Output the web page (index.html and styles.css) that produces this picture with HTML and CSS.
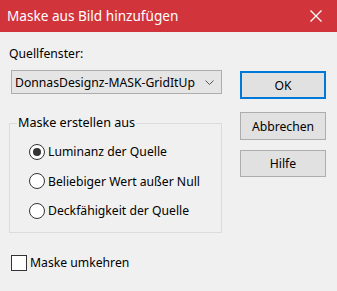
FILE: index.html
```html
<!DOCTYPE html>
<html lang="de">
<head>
  <meta charset="UTF-8">
  <title>Maske aus Bild hinzufügen</title>
  <link rel="stylesheet" href="styles.css">
</head>
<body>
  <div class="window">
    <div class="titlebar">
      <span class="title">Maske aus Bild hinzufügen</span>
      <svg class="close" width="12" height="12" viewBox="0 0 12 12">
        <path d="M0.5 0.5 L11.5 11.5 M11.5 0.5 L0.5 11.5" stroke="#fff" stroke-width="1.3" fill="none"/>
      </svg>
    </div>

    <div class="content">
      <div class="left">
        <div class="field-label">Quellfenster:</div>
        <div class="combo">
          <span>DonnasDesignz-MASK-GridItUp</span>
          <svg class="chevron" width="9" height="5" viewBox="0 0 9 5">
            <path d="M0.5 0.5 L4.5 4.5 L8.5 0.5" stroke="#555" stroke-width="1" fill="none"/>
          </svg>
        </div>

        <div class="group">
          <span class="group-title">Maske erstellen aus</span>
          <label class="option"><input type="radio" name="src" checked> Luminanz der Quelle</label>
          <label class="option"><input type="radio" name="src"> Beliebiger Wert außer Null</label>
          <label class="option"><input type="radio" name="src"> Deckfähigkeit der Quelle</label>
        </div>

        <label class="check"><input type="checkbox"> Maske umkehren</label>
      </div>

      <div class="right">
        <button class="btn default">OK</button>
        <button class="btn">Abbrechen</button>
        <button class="btn help">Hilfe</button>
      </div>
    </div>
  </div>
</body>
</html>
```

FILE: styles.css
```css
body {
  margin: 0;
  font-family: 'Noto Sans', 'DejaVu Sans', sans-serif;
  font-size: 12.2px;
  color: #000;
  background: #f0f0f0;
}

.window {
  width: 337px;
  height: 291px;
  background: #f0f0f0;
}

.titlebar {
  height: 32px;
  background: #d1343a;
  display: flex;
  align-items: center;
  justify-content: space-between;
  padding: 0 15px 0 7px;
}

.title {
  color: #fff;
  font-size: 13.6px;
  margin-top: -1px;
}

.content {
  display: flex;
  padding: 13px 0 0 9px;
}

.left {
  width: 213px;
}

.field-label {
  height: 18px;
  line-height: 18px;
}

.combo {
  margin: 7px 0 0 2px;
  height: 24px;
  box-sizing: border-box;
  border: 1px solid #adadad;
  background: #e5e5e5;
  display: flex;
  align-items: center;
  justify-content: space-between;
  padding: 0 7px 0 3px;
  font-size: 12.2px;
  white-space: nowrap;
}

.chevron {
  margin-top: 1px;
  flex-shrink: 0;
}

/* Gruppe mit Radio-Buttons */
.group {
  margin-top: 29px;
  padding: 0 0 6px 19px;
  border: 1px solid #dcdcdc;
  box-sizing: border-box;
  width: 213px;
  display: flex;
  flex-direction: column;
}

.group-title {
  align-self: flex-start;
  margin: -9px 0 0 -12px;
  padding: 0 1px;
  line-height: 16px;
  font-size: 12.6px;
  background: #f0f0f0;
}

.group-title + .option {
  margin-top: 6px;
}

.option {
  display: flex;
  align-items: center;
  height: 29.5px;
  white-space: nowrap;
}

.option input {
  appearance: none;
  width: 16px;
  height: 16px;
  margin: 0 3px 0 0;
  border: 1px solid #333;
  border-radius: 50%;
  background: #fff;
  box-sizing: border-box;
  display: flex;
  align-items: center;
  justify-content: center;
}

.option input:checked::after {
  content: "";
  width: 8px;
  height: 8px;
  border-radius: 50%;
  background: #333;
}

.check {
  display: flex;
  align-items: center;
  margin: 22px 0 0 2px;
  height: 16px;
}

.check input {
  appearance: none;
  width: 16px;
  height: 16px;
  margin: 0 3px 0 0;
  border: 1px solid #333;
  background: #fff;
  box-sizing: border-box;
}

.right {
  display: flex;
  flex-direction: column;
  margin-left: 18px;
  padding-top: 26px;
}

.btn {
  width: 86px;
  height: 28px;
  background: #e1e1e1;
  border: 1px solid #adadad;
  font-family: inherit;
  font-size: 12.2px;
  color: #000;
  padding: 0;
  margin-bottom: 10px;
}

.btn.default {
  border: 2px solid #0078d7;
  margin-bottom: 13px;
}

.btn.help {
  height: 27px;
}
```
